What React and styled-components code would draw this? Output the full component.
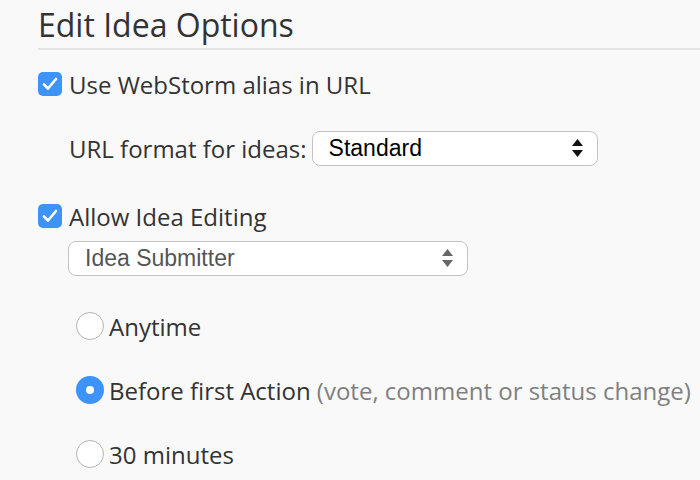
import React from 'react';
import styled, { createGlobalStyle } from 'styled-components';

const GlobalStyle = createGlobalStyle`
  body {
    margin: 0;
    background: #f9f9f9;
    font-family: "Open Sans", "DejaVu Sans", sans-serif;
    color: #333;
  }
`;

const Page = styled.div`
  padding-left: 38px;
  width: 662px;
  height: 480px;
  overflow: hidden;
`;

const Title = styled.h2`
  margin: 0;
  padding-top: 4px;
  height: 44px;
  font-size: 32px;
  font-weight: 400;
  line-height: 42px;
  color: #333;
  border-bottom: 2px solid #e4e4e4;
  white-space: nowrap;
`;

const Row = styled.label`
  display: flex;
  align-items: center;
  gap: ${p => p.gap || 7}px;
  margin-top: ${p => p.top || 0}px;
  margin-left: ${p => p.indent || 0}px;
  height: ${p => p.height || 28}px;
  font-size: 24px;
  white-space: nowrap;
`;

const CheckBox = styled.span`
  display: flex;
  align-items: center;
  justify-content: center;
  width: 24px;
  height: 24px;
  border-radius: 5px;
  background: #3d93f7;
  flex-shrink: 0;
`;

const Radio = styled.span`
  display: flex;
  align-items: center;
  justify-content: center;
  width: 28px;
  height: 28px;
  border-radius: 50%;
  box-sizing: border-box;
  flex-shrink: 0;
  background: ${p => (p.checked ? '#3d93f7' : '#fff')};
  border: ${p => (p.checked ? 'none' : '1px solid #b5b5b5')};

  &::after {
    content: '';
    display: ${p => (p.checked ? 'block' : 'none')};
    width: 8px;
    height: 8px;
    border-radius: 50%;
    background: #fff;
  }
`;

const Select = styled.div`
  display: flex;
  align-items: center;
  justify-content: space-between;
  box-sizing: border-box;
  width: ${p => p.width}px;
  height: 35px;
  padding: 0 14px 0 16px;
  border: 1px solid #c3c3c3;
  border-radius: 8px;
  background: #fff;
  font-family: "Liberation Sans", Arial, sans-serif;
  font-size: 23px;
  color: ${p => (p.muted ? '#555' : '#000')};
  flex-shrink: 0;
`;

const Arrows = ({ color }) => (
  <svg width="11" height="18" viewBox="0 0 11 18">
    <path d="M5.5 0 L11 7 H0 Z" fill={color} />
    <path d="M5.5 18 L11 11 H0 Z" fill={color} />
  </svg>
);

const Check = () => (
  <svg width="16" height="14" viewBox="0 0 16 14">
    <path d="M2 7.5 L6 11.5 L14 2" fill="none" stroke="#fff" strokeWidth="2.6" strokeLinecap="round" strokeLinejoin="round" />
  </svg>
);

const Hint = styled.span`
  color: #808080;
`;

export default function App() {
  return (
    <Page>
      <GlobalStyle />
      <Title>Edit Idea Options</Title>
      <Row top={20} height={28}>
        <CheckBox><Check /></CheckBox>
        Use WebStorm alias in URL
      </Row>
      <Row top={32} height={36} indent={31} gap={5}>
        URL format for ideas:
        <Select width={286}>
          Standard
          <Arrows color="#111" />
        </Select>
      </Row>
      <Row top={36} height={28}>
        <CheckBox><Check /></CheckBox>
        Allow Idea Editing
      </Row>
      <Row top={10} height={36} indent={30}>
        <Select width={400} muted>
          Idea Submitter
          <Arrows color="#666" />
        </Select>
      </Row>
      <Row top={36} height={28} indent={38} gap={5}>
        <Radio />
        Anytime
      </Row>
      <Row top={36} height={28} indent={38} gap={5}>
        <Radio checked />
        <span>Before first Action <Hint>(vote, comment or status change)</Hint></span>
      </Row>
      <Row top={36} height={28} indent={38} gap={5}>
        <Radio />
        30 minutes
      </Row>
    </Page>
  );
}
